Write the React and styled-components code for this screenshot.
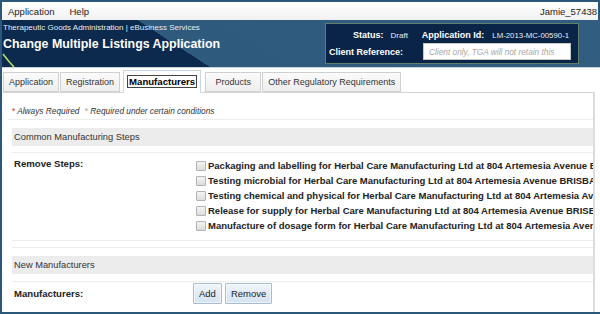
import React from 'react'
import styled, { createGlobalStyle } from 'styled-components'

const GlobalStyle = createGlobalStyle`
  html, body { margin:0; padding:0; background:#fff; }
  body { font-family:"Liberation Sans", Arial, sans-serif; color:#222; }
  * { box-sizing:border-box; }
`

const steps = [
  'Packaging and labelling',
  'Testing microbial',
  'Testing chemical and physical',
  'Release for supply',
  'Manufacture of dosage form',
]

const tabs = ['Application', 'Registration', 'Manufacturers', 'Products', 'Other Regulatory Requirements']

const App = () => {
  return (
    <Frame>
      <GlobalStyle />
      <MenuBar>
        <MenuItem>Application</MenuItem>
        <MenuItem>Help</MenuItem>
        <User>Jamie_57438</User>
      </MenuBar>
      <Header>
        <TitleBlock>
          <SubTitle>Therapeutic Goods Administration | eBusiness Services</SubTitle>
          <Title>Change Multiple Listings Application</Title>
        </TitleBlock>
        <Swoosh width="16" height="14" viewBox="0 0 16 14">
          <path d="M1 1 C4 5 7 9 12 14" stroke="#b6dc6a" strokeWidth="1.6" fill="none" />
        </Swoosh>
        <InfoBox>
          <InfoRow>
            <InfoLabel>Status:</InfoLabel>
            <InfoValue>Draft</InfoValue>
            <InfoLabel $gap={14}>Application Id:</InfoLabel>
            <InfoValue $small>LM-2013-MC-00590-1</InfoValue>
          </InfoRow>
          <RefRow>
            <InfoLabel>Client Reference:</InfoLabel>
            <RefInput placeholder="Client only, TGA will not retain this" />
          </RefRow>
        </InfoBox>
      </Header>
      <Body>
        <TabRow>
          {tabs.map(t => (
            <Tab key={t} $active={t === 'Manufacturers'} $wide={t === 'Products'}>
              {t === 'Manufacturers' ? <Focus>{t}</Focus> : t}
            </Tab>
          ))}
        </TabRow>
        <Panel>
          <Note>
            <Star $red>*</Star> Always Required <Star>*</Star> Required under certain conditions
          </Note>
          <Divider $left={5} />
          <Band $top={8}>Common Manufacturing Steps</Band>
          <Divider $left={9} $top={6} />
          <FieldRow>
            <FieldLabel>Remove Steps:</FieldLabel>
            <CheckList>
              {steps.map(s => (
                <CheckItem key={s}>
                  <Box />
                  {s} for Herbal Care Manufacturing Ltd at 804 Artemesia Avenue BRISBANE QLD 4000
                </CheckItem>
              ))}
            </CheckList>
          </FieldRow>
          <Divider $left={9} $top={6} />
          <Divider $left={9} $top={6} />
          <Band $top={8}>New Manufacturers</Band>
          <Divider $left={9} $top={7} />
          <ButtonRow>
            <FieldLabel $w={187}>Manufacturers:</FieldLabel>
            <Button>Add</Button>
            <Button>Remove</Button>
          </ButtonRow>
        </Panel>
      </Body>
    </Frame>
  )
}

const Frame = styled.div`
  width:600px;
  height:314px;
  border:2px solid #2b5779;
  border-right:none;
  overflow:hidden;
  display:flex;
  flex-direction:column;
  background:#fff;
`
const MenuBar = styled.div`
  height:18px;
  flex-shrink:0;
  display:flex;
  align-items:center;
  padding:0 0 0 6px;
  background:linear-gradient(#ffffff, #f1f1f1);
  border-right:2px solid #2b5779;
  font-size:9.5px;
  color:#222;
`
const MenuItem = styled.span`
  margin-right:15px;
`
const User = styled.span`
  margin-left:auto;
  padding-right:1px;
`
const Header = styled.header`
  position:relative;
  height:48px;
  flex-shrink:0;
  display:flex;
  justify-content:space-between;
  align-items:flex-start;
  padding:3px 21px 0 1px;
  background:linear-gradient(33deg, #0b2a4d 31%, #2e5a7d 31%, #315d80 100%);
  border-bottom:1px solid #c9d3dc;
`
const TitleBlock = styled.div`
  display:flex;
  flex-direction:column;
  color:#fff;
`
const SubTitle = styled.div`
  font-size:8px;
  line-height:10px;
  color:#e6edf3;
`
const Title = styled.div`
  margin-top:3px;
  font-size:12.4px;
  line-height:16px;
  font-weight:bold;
`
const Swoosh = styled.svg`
  position:absolute;
  left:0;
  bottom:0;
`
const InfoBox = styled.div`
  width:254px;
  height:41px;
  background:#0a2447;
  border:1px solid #5f7f6c;
  color:#fff;
`
const InfoRow = styled.div`
  display:flex;
  align-items:center;
  height:14px;
  margin-top:4px;
  padding-left:27px;
`
const RefRow = styled.div`
  display:flex;
  align-items:center;
  margin-top:1px;
  padding-left:3px;
  gap:20px;
`
const InfoLabel = styled.span`
  font-size:9px;
  font-weight:bold;
  margin-left:${p => p.$gap || 0}px;
`
const InfoValue = styled.span`
  font-size:${p => (p.$small ? '7.8px' : '8px')};
  margin-left:${p => (p.$small ? 8 : 7)}px;
  color:#e8eef4;
`
const RefInput = styled.input`
  width:148px;
  height:17px;
  border:1px solid #c8c8c8;
  padding:0 0 0 5px;
  font-family:"Liberation Sans", Arial, sans-serif;
  font-size:8.3px;
  font-style:italic;
  &::placeholder { color:#a8a8a8; }
`
const Body = styled.div`
  flex:1;
  display:flex;
  flex-direction:column;
  padding:2px 5px 0 1px;
  min-height:0;
`
const TabRow = styled.div`
  display:flex;
  align-items:flex-end;
  height:22px;
  position:relative;
  z-index:1;
`
const Tab = styled.div`
  height:${p => (p.$active ? '23px' : '20px')};
  margin:${p => (p.$active ? '0 4px -1px 2px' : '0 1px 0 0')};
  min-width:${p => (p.$wide ? '56px' : 'auto')};
  padding:0 ${p => (p.$active ? '4px' : '5px')} ${p => (p.$active ? '2px' : '0')};
  display:flex;
  align-items:center;
  justify-content:center;
  font-size:9px;
  font-weight:${p => (p.$active ? 'bold' : 'normal')};
  color:${p => (p.$active ? '#000' : '#333')};
  background:${p => (p.$active ? '#fff' : 'linear-gradient(#fbfbfb, #eeeeee)')};
  border:1px solid ${p => (p.$active ? '#c9d6e3' : '#d0d0d0')};
  border-bottom:${p => (p.$active ? 'none' : '1px solid #d0d0d0')};
`
const Focus = styled.span`
  outline:1px solid #444;
  padding:0 1px;
  font-size:9.6px;
  line-height:11px;
`
const Panel = styled.div`
  flex:1;
  min-height:0;
  overflow:hidden;
  border-top:1px solid #d6d6d6;
  border-right:2px solid #dcdcdc;
`
const Note = styled.div`
  height:26px;
  padding:13px 0 0 9px;
  font-size:8.3px;
  line-height:11px;
  font-style:italic;
  color:#333;
`
const Star = styled.span`
  color:${p => (p.$red ? '#e02020' : '#999')};
  font-style:normal;
  margin-left:${p => (p.$red ? 0 : '3px')};
`
const Divider = styled.div`
  height:1px;
  margin:${p => p.$top || 0}px 0 0 ${p => p.$left || 0}px;
  background:#ececec;
`
const Band = styled.div`
  height:18px;
  margin:${p => p.$top}px 0 0 9px;
  padding-left:2px;
  display:flex;
  align-items:center;
  background:#ececec;
  font-size:9.3px;
  color:#333;
`
const FieldRow = styled.div`
  display:flex;
  align-items:flex-start;
`
const FieldLabel = styled.div`
  width:${p => p.$w || 193}px;
  flex-shrink:0;
  padding:3px 0 0 11px;
  font-size:9.6px;
  line-height:15px;
  font-weight:bold;
  color:#222;
`
const CheckList = styled.div`
  display:flex;
  flex-direction:column;
  padding-top:5px;
  padding-bottom:1px;
  min-width:0;
`
const CheckItem = styled.div`
  display:flex;
  align-items:center;
  height:15px;
  white-space:nowrap;
  font-size:9.5px;
  font-weight:bold;
  color:#222;
`
const Box = styled.span`
  width:10px;
  height:10px;
  flex-shrink:0;
  margin:0 2px 0 0;
  border:1px solid #b3b3b3;
  border-radius:1px;
  background:linear-gradient(#f4f4f4, #dcdcdc);
`
const ButtonRow = styled.div`
  display:flex;
  align-items:flex-start;
  margin-top:1px;
  gap:3px;
  ${FieldLabel} { padding-top:3px; }
`
const Button = styled.button`
  height:21px;
  padding:0 5px;
  font-family:"Liberation Sans", Arial, sans-serif;
  font-size:9.5px;
  color:#222;
  background:linear-gradient(#eef4fb, #d4e2f1);
  border:1px solid #a6bad2;
  border-radius:1px;
  box-shadow:inset 0 0 0 1px rgba(255,255,255,0.6);
`

export default App
